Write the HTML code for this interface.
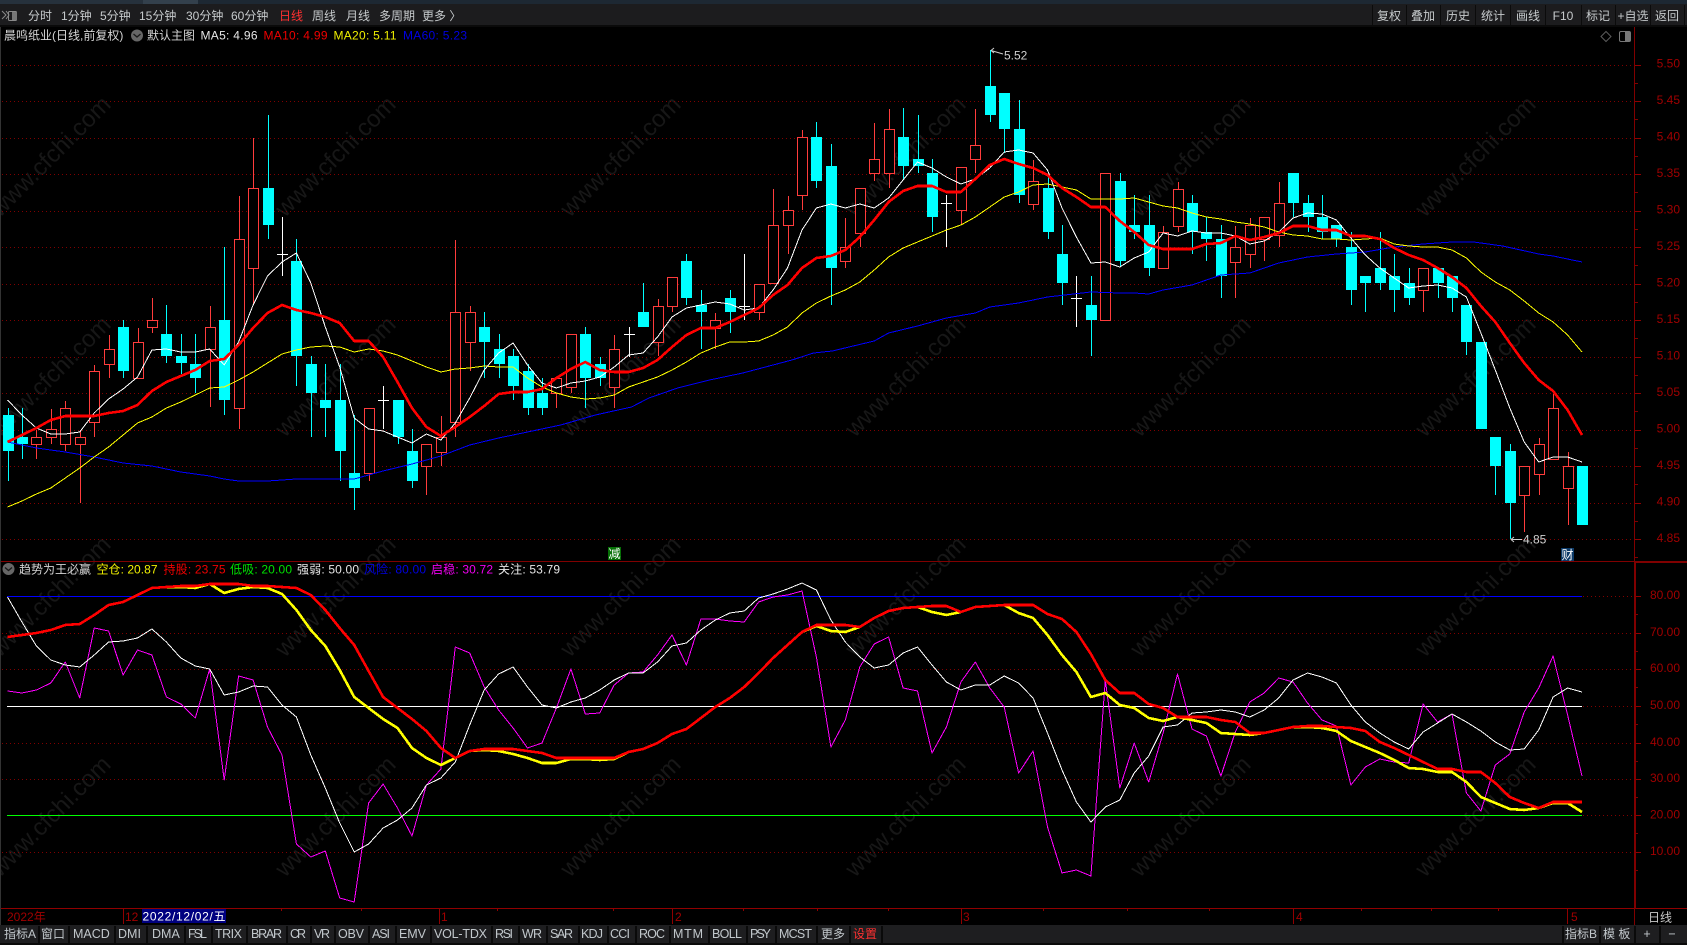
<!DOCTYPE html>
<html>
<head>
<meta charset="utf-8">
<title>晨鸣纸业</title>
<style>
html,body{margin:0;padding:0;background:#000;width:1687px;height:945px;overflow:hidden}
svg{display:block;position:absolute;left:0;top:0}
text{font-family:"Liberation Sans","Noto Sans CJK SC",sans-serif;font-size:12px}
.t{fill:#c6cacc}
.b{fill:#c2c8cc;font-size:12.5px}
.ax{fill:#a00000;text-anchor:end}
.d{fill:#a00000}
.wm{fill:#171717;font-size:24px;text-anchor:middle}
.c{text-anchor:middle}
</style>
</head>
<body>
<svg width="1687" height="945" viewBox="0 0 1687 945" xmlns="http://www.w3.org/2000/svg">
<rect width="1687" height="945" fill="#000"/>

<!-- watermark -->
<g>
<text class="wm" transform="translate(56 162) rotate(-45)">www.cfchi.com</text>
<text class="wm" transform="translate(341 162) rotate(-45)">www.cfchi.com</text>
<text class="wm" transform="translate(626 162) rotate(-45)">www.cfchi.com</text>
<text class="wm" transform="translate(911 162) rotate(-45)">www.cfchi.com</text>
<text class="wm" transform="translate(1196 162) rotate(-45)">www.cfchi.com</text>
<text class="wm" transform="translate(1481 162) rotate(-45)">www.cfchi.com</text>
<text class="wm" transform="translate(56 382) rotate(-45)">www.cfchi.com</text>
<text class="wm" transform="translate(341 382) rotate(-45)">www.cfchi.com</text>
<text class="wm" transform="translate(626 382) rotate(-45)">www.cfchi.com</text>
<text class="wm" transform="translate(911 382) rotate(-45)">www.cfchi.com</text>
<text class="wm" transform="translate(1196 382) rotate(-45)">www.cfchi.com</text>
<text class="wm" transform="translate(1481 382) rotate(-45)">www.cfchi.com</text>
<text class="wm" transform="translate(56 602) rotate(-45)">www.cfchi.com</text>
<text class="wm" transform="translate(341 602) rotate(-45)">www.cfchi.com</text>
<text class="wm" transform="translate(626 602) rotate(-45)">www.cfchi.com</text>
<text class="wm" transform="translate(911 602) rotate(-45)">www.cfchi.com</text>
<text class="wm" transform="translate(1196 602) rotate(-45)">www.cfchi.com</text>
<text class="wm" transform="translate(1481 602) rotate(-45)">www.cfchi.com</text>
<text class="wm" transform="translate(56 822) rotate(-45)">www.cfchi.com</text>
<text class="wm" transform="translate(341 822) rotate(-45)">www.cfchi.com</text>
<text class="wm" transform="translate(626 822) rotate(-45)">www.cfchi.com</text>
<text class="wm" transform="translate(911 822) rotate(-45)">www.cfchi.com</text>
<text class="wm" transform="translate(1196 822) rotate(-45)">www.cfchi.com</text>
<text class="wm" transform="translate(1481 822) rotate(-45)">www.cfchi.com</text>
</g>

<g id="grid"></g>
<g id="candles" shape-rendering="crispEdges"></g>
<g id="lines" fill="none" stroke-linejoin="round" shape-rendering="crispEdges"></g>

<!-- frame lines -->
<g shape-rendering="crispEdges">
<rect x="0" y="27" width="1" height="898" fill="#333"/>
<rect x="1" y="561" width="1686" height="1" fill="#800000"/>
<rect x="1635" y="561" width="52" height="2" fill="#800000"/>
<rect x="1" y="908" width="1686" height="1" fill="#900000"/>
<rect x="1634" y="27" width="1" height="534" fill="#800000"/>
<rect x="1634" y="561" width="2" height="348" fill="#800000"/>
<rect x="1634" y="909" width="1" height="16" fill="#800000"/>
</g>

<!-- price axis -->
<text class="ax" x="1680" y="67.5">5.50</text>
<text class="ax" x="1680" y="104">5.45</text>
<text class="ax" x="1680" y="140.5">5.40</text>
<text class="ax" x="1680" y="177">5.35</text>
<text class="ax" x="1680" y="213.5">5.30</text>
<text class="ax" x="1680" y="250">5.25</text>
<text class="ax" x="1680" y="286.5">5.20</text>
<text class="ax" x="1680" y="323">5.15</text>
<text class="ax" x="1680" y="359.5">5.10</text>
<text class="ax" x="1680" y="396">5.05</text>
<text class="ax" x="1680" y="432.5">5.00</text>
<text class="ax" x="1680" y="469">4.95</text>
<text class="ax" x="1680" y="505.5">4.90</text>
<text class="ax" x="1680" y="542">4.85</text>
<text class="ax" x="1680" y="599">80.00</text>
<text class="ax" x="1680" y="636">70.00</text>
<text class="ax" x="1680" y="672">60.00</text>
<text class="ax" x="1680" y="709">50.00</text>
<text class="ax" x="1680" y="746">40.00</text>
<text class="ax" x="1680" y="782">30.00</text>
<text class="ax" x="1680" y="818.5">20.00</text>
<text class="ax" x="1680" y="855">10.00</text>

<!-- top bar -->
<rect x="0" y="0" width="1687" height="4" fill="#1d2833"/>
<rect x="0" y="0" width="143" height="4" fill="#26313c"/>
<rect x="143" y="0" width="55" height="4" fill="#33404c"/>
<rect x="0" y="4" width="1687" height="21" fill="#1c1c1e"/>
<rect x="0" y="25" width="1687" height="2" fill="#0a0a0a"/>
<g fill="none" stroke="#8a8a8a">
<path d="M2 11l4 4-4 4M6 11l3 4-3 4" stroke-width="1"/>
<rect x="8.5" y="11.5" width="8" height="9" rx="1"/>
</g>
<rect x="12" y="12" width="5" height="8" fill="#777"/>
<text class="t" x="28" y="20">分时</text>
<text class="t" x="61" y="20">1分钟</text>
<text class="t" x="100" y="20">5分钟</text>
<text class="t" x="139" y="20">15分钟</text>
<text class="t" x="186" y="20">30分钟</text>
<text class="t" x="231" y="20">60分钟</text>
<text x="279" y="20" fill="#ff3030">日线</text>
<text class="t" x="312" y="20">周线</text>
<text class="t" x="346" y="20">月线</text>
<text class="t" x="379" y="20">多周期</text>
<text class="t" x="422" y="20">更多 〉</text>
<g fill="#0b0b0b" shape-rendering="crispEdges">
<rect x="1372" y="5" width="1" height="20"/><rect x="1406" y="5" width="1" height="20"/><rect x="1440" y="5" width="1" height="20"/><rect x="1475" y="5" width="1" height="20"/><rect x="1510" y="5" width="1" height="20"/><rect x="1545" y="5" width="1" height="20"/><rect x="1581" y="5" width="1" height="20"/><rect x="1615" y="5" width="1" height="20"/><rect x="1650" y="5" width="1" height="20"/><rect x="1684" y="5" width="1" height="20"/>
</g>
<text class="t c" x="1389" y="20">复权</text>
<text class="t c" x="1423" y="20">叠加</text>
<text class="t c" x="1458" y="20">历史</text>
<text class="t c" x="1493" y="20">统计</text>
<text class="t c" x="1528" y="20">画线</text>
<text class="t c" x="1563" y="20">F10</text>
<text class="t c" x="1598" y="20">标记</text>
<text class="t c" x="1633" y="20">+自选</text>
<text class="t c" x="1667" y="20">返回</text>

<!-- info row -->
<text x="4" y="39.5" fill="#d4d4d4">晨鸣纸业(日线,前复权)</text>
<circle cx="137" cy="35.5" r="6" fill="#666"/>
<path d="M133.5 34l3.5 3 3.5-3" fill="none" stroke="#1a1a1a" stroke-width="1.3"/>
<text x="147" y="39.5" fill="#d4d4d4">默认主图</text>
<text x="200.5" y="39.5" fill="#e6e6e6" textLength="57">MA5: 4.96</text>
<text x="263.5" y="39.5" fill="#f00000" textLength="64">MA10: 4.99</text>
<text x="333.5" y="39.5" fill="#f0f000" textLength="63">MA20: 5.11</text>
<text x="403" y="39.5" fill="#0000e0" textLength="64">MA60: 5.23</text>
<path d="M1606 31.5l5 5-5 5-5-5z" fill="none" stroke="#5c5c5c"/>
<rect x="1619.5" y="31.5" width="11" height="10" rx="1.5" fill="none" stroke="#777"/>
<rect x="1625" y="32" width="5" height="9" fill="#777"/>

<!-- indicator title -->
<circle cx="8.5" cy="569" r="6" fill="#666"/>
<path d="M5 567.5l3.5 3 3.5-3" fill="none" stroke="#1a1a1a" stroke-width="1.3"/>
<text x="19" y="573.5" fill="#d4d4d4">趋势为王必赢</text>
<text x="96.5" y="573.5" fill="#f0f000" textLength="61">空仓: 20.87</text>
<text x="163.5" y="573.5" fill="#f00000" textLength="62">持股: 23.75</text>
<text x="230" y="573.5" fill="#00e000" textLength="62">低吸: 20.00</text>
<text x="297" y="573.5" fill="#e6e6e6" textLength="62">强弱: 50.00</text>
<text x="364" y="573.5" fill="#0000e0" textLength="62">风险: 80.00</text>
<text x="431" y="573.5" fill="#f000f0" textLength="62">启稳: 30.72</text>
<text x="498" y="573.5" fill="#e6e6e6" textLength="62">关注: 53.79</text>

<!-- marks -->
<path d="M991 50.5L1003 54M991 50.5l3-2.5M991 50.5l3 2.5" fill="none" stroke="#ccc"/>
<text x="1004" y="59.5" fill="#d0d0d0">5.52</text>
<path d="M1511 539.5H1522M1511 539.5l3-2.5M1511 539.5l3 2.5" fill="none" stroke="#ccc"/>
<text x="1523" y="543.5" fill="#d0d0d0">4.85</text>
<rect x="608" y="547" width="13" height="13" fill="#067006"/>
<text x="608.5" y="558" fill="#fff" style="font-size:12px">减</text>
<rect x="1561" y="548" width="13" height="13" fill="#0c3a68"/>
<text x="1561.5" y="559" fill="#fff" style="font-size:12px">财</text>

<!-- date axis -->
<text class="d" x="7" y="921">2022年</text>
<rect x="123" y="909" width="1" height="15" fill="#900000"/>
<text class="d" x="125" y="921">12</text>
<rect x="142" y="909" width="84" height="14" fill="#000080"/>
<text x="142.5" y="920.5" fill="#fff" textLength="83">2022/12/02/五</text>
<rect x="439" y="909" width="1" height="15" fill="#900000"/>
<text class="d" x="441" y="921">1</text>
<rect x="672" y="909" width="1" height="15" fill="#900000"/>
<text class="d" x="675" y="921">2</text>
<rect x="961" y="909" width="1" height="15" fill="#900000"/>
<text class="d" x="963" y="921">3</text>
<rect x="1293" y="909" width="1" height="15" fill="#900000"/>
<text class="d" x="1296" y="921">4</text>
<rect x="1567" y="909" width="1" height="15" fill="#900000"/>
<text class="d" x="1571" y="921">5</text>
<text x="1648" y="921.5" fill="#c8c8c8">日线</text>

<!-- bottom bar -->
<rect x="0" y="925" width="1687" height="18" fill="#1e1e20"/>
<g id="btm" fill="#0a0a0a" shape-rendering="crispEdges"></g>
<text class="b" x="4" y="938" style="font-size:12px">指标A</text>
<text class="b" x="41" y="938" style="font-size:12px">窗口</text>
<text class="b" x="73" y="938">MACD</text>
<text class="b" x="118" y="938">DMI</text>
<text class="b" x="152" y="938">DMA</text>
<text class="b" x="188" y="938" textLength="19">FSL</text>
<text class="b" x="215" y="938" textLength="27">TRIX</text>
<text class="b" x="251" y="938" textLength="31">BRAR</text>
<text class="b" x="290" y="938" textLength="16">CR</text>
<text class="b" x="314" y="938" textLength="16">VR</text>
<text class="b" x="338" y="938" textLength="26">OBV</text>
<text class="b" x="372" y="938" textLength="18">ASI</text>
<text class="b" x="399" y="938" textLength="27">EMV</text>
<text class="b" x="434" y="938" textLength="53">VOL-TDX</text>
<text class="b" x="495" y="938" textLength="18">RSI</text>
<text class="b" x="522" y="938" textLength="20">WR</text>
<text class="b" x="550" y="938" textLength="23">SAR</text>
<text class="b" x="581" y="938" textLength="22">KDJ</text>
<text class="b" x="610" y="938" textLength="20">CCI</text>
<text class="b" x="639" y="938" textLength="26">ROC</text>
<text class="b" x="673" y="938" textLength="30">MTM</text>
<text class="b" x="712" y="938" textLength="30">BOLL</text>
<text class="b" x="750" y="938" textLength="21">PSY</text>
<text class="b" x="779" y="938" textLength="33">MCST</text>
<text class="b" x="821" y="938" style="font-size:12px">更多</text>
<text x="853" y="938" fill="#ff3030">设置</text>
<text class="b" x="1565" y="938" style="font-size:12px">指标B</text>
<text class="b" x="1603" y="938" style="font-size:12px">模 板</text>
<text class="b c" x="1647" y="938">+</text>
<text class="b c" x="1672" y="938">−</text>
<rect x="0" y="943" width="1687" height="2" fill="#0a0a0a"/>
</svg>

<script>
(function(){
var X=function(i){return 7.5+14.445*i;};
var DR='#800000';
var DASH='1 3';
var g='';
var py=[65,101,137.5,174,210.5,247,283.5,320,356.5,393,429.5,466,503,539];
py.forEach(function(y){
  g+='<path d="M2 '+(Math.round(y)+.5)+'H1634" stroke="'+DR+'" stroke-dasharray="'+DASH+'" fill="none" shape-rendering="crispEdges"/>';
  g+='<path d="M1635 '+(Math.round(y)+.5)+'h6" stroke="#900000" fill="none" shape-rendering="crispEdges"/>';
  g+='<path d="M1635 '+(Math.round(y+18.25)+.5)+'h3" stroke="#800000" fill="none" shape-rendering="crispEdges"/>';
});
[633,669,743,779,852].forEach(function(y){
  g+='<path d="M2 '+(y+.5)+'H1634" stroke="'+DR+'" stroke-dasharray="'+DASH+'" fill="none" shape-rendering="crispEdges"/>';
});
[596,706,815].forEach(function(y){
  g+='<path d="M1583 '+(y+.5)+'H1634" stroke="'+DR+'" stroke-dasharray="'+DASH+'" fill="none" shape-rendering="crispEdges"/>';
});
[596,633,669,706,743,779,815,852].forEach(function(y){
  g+='<path d="M1635 '+(y+.5)+'h6" stroke="#900000" fill="none" shape-rendering="crispEdges"/>';
  g+='<path d="M1635 '+(y+18.5)+'h3" stroke="#800000" fill="none" shape-rendering="crispEdges"/>';
});
[[596,'#0000ff'],[706,'#ffffff'],[815,'#00ff00']].forEach(function(a){
  g+='<path d="M7 '+(a[0]+.5)+'H1582" stroke="'+a[1]+'" fill="none" shape-rendering="crispEdges"/>';
});
[281,361,497,613,743,817,888,1043,1127,1209,1361,1431,1498].forEach(function(x){
  g+='<path d="M'+(x+.5)+' 909v2" stroke="#900000" fill="none" shape-rendering="crispEdges"/>';
});
document.getElementById('grid').innerHTML=g;

var C="c 408 415 451 481|c 408 437 444 459|r 430 437 444 459|r 409 429 437 444|r 401 408 444 451|r 430 437 444 503|r 365 371 422 437|r 335 349 364 378|c 320 327 371 378|r 328 342 378 378|r 298 320 327 333|c 305 334 356 363|c 334 356 363 374|c 334 364 378 393|r 306 327 349 407|c 247 320 400 415|r 196 239 408 429|r 138 188 268 305|c 115 188 225 239|w 217 254 254 276|c 239 261 356 386|c 356 364 393 437|c 364 400 408 437|c 364 400 451 481|c 415 473 488 510|r 408 408 473 481|w 386 400 400 429|c 400 400 437 444|c 429 451 481 488|r 444 444 466 495|r 416 437 452 466|r 240 312 422 437|r 306 312 342 371|c 312 327 342 378|c 334 349 364 378|c 349 356 386 400|c 364 371 408 415|c 378 393 408 415|r 378 378 393 408|r 334 334 387 393|c 327 334 378 408|c 357 364 378 386|r 335 349 387 408|w 327 334 334 357|c 283 312 327 327|r 299 306 342 356|r 277 277 306 312|c 254 261 298 305|c 290 305 312 349|r 313 320 328 349|c 290 298 312 333|w 254 306 306 320|r 284 284 312 320|r 189 225 283 283|r 196 210 225 254|r 130 137 195 210|c 122 137 181 188|c 144 166 268 305|r 218 247 261 268|r 188 188 233 247|r 123 159 173 181|r 109 129 173 188|c 108 137 166 180|c 115 159 166 173|c 159 173 217 232|w 195 203 203 247|r 167 167 210 225|r 109 145 159 173|c 50 86 115 122|c 93 93 129 153|c 100 129 195 203|r 160 181 204 210|c 177 188 232 239|c 225 254 283 305|w 276 298 298 327|c 276 305 320 356|r 173 173 320 320|c 173 181 261 267|c 195 225 232 239|c 195 225 268 276|r 226 232 268 268|r 182 189 226 232|c 195 203 232 254|c 217 232 239 261|c 225 239 276 298|r 226 247 262 298|r 218 225 254 268|r 217 217 239 261|r 182 203 235 247|c 173 173 203 217|c 195 203 217 232|c 195 217 232 239|c 225 225 239 247|c 232 247 290 305|c 276 276 283 312|c 232 268 283 290|c 254 276 290 312|c 268 283 298 305|r 268 268 290 312|c 268 268 283 298|c 276 276 298 312|c 305 305 342 355|c 342 342 429 429|c 437 437 466 495|c 444 451 503 539|r 466 466 495 532|r 438 444 474 495|r 394 408 459 459|r 452 466 488 525|c 466 466 525 525".split('|');
var s='';
C.forEach(function(r,i){
  var p=r.split(' '),t=p[0],wt=+p[1],bt=+p[2],bb=+p[3],wb=+p[4];
  var x=Math.round(X(i));
  var col=t=='c'?'#00ffff':t=='r'?'#ff3c3c':'#ffffff';
  if(wb>wt) s+='<rect x="'+x+'" y="'+wt+'" width="1" height="'+(wb-wt)+'" fill="'+col+'"/>';
  if(t=='c') s+='<rect x="'+(x-5)+'" y="'+bt+'" width="11" height="'+(bb-bt)+'" fill="#00ffff"/>';
  else if(t=='r') s+='<rect x="'+(x-4.5)+'" y="'+(bt+.5)+'" width="10" height="'+(bb-bt)+'" fill="#000" stroke="#ff3c3c"/>';
  else s+='<rect x="'+(x-5)+'" y="'+bt+'" width="11" height="1" fill="#fff"/>';
});
document.getElementById('candles').innerHTML=s;

var ma5=[400,415,428,434,434,432,413,399,389,377,350,349,352,352,349,365,342,305,276,262,253,283,327,367,418,429,431,437,443,434,440,423,398,370,353,343,365,383,388,383,381,377,367,355,353,337,317,308,305,302,304,310,308,290,268,230,208,204,208,204,208,198,180,162,168,177,184,179,168,152,150,153,170,208,237,263,262,267,258,252,233,236,231,233,233,236,244,241,232,218,213,214,220,238,255,268,278,288,286,285,288,297,333,370,408,442,462,457,457,462];
var ma10=[442,435,428,420,416,416,416,413,411,405,391,382,376,370,361,359,345,328,313,305,310,313,317,323,341,341,357,382,408,427,436,427,417,406,394,392,392,389,378,369,362,370,372,372,368,360,347,335,328,328,322,315,308,295,285,268,258,256,250,237,220,202,191,186,186,192,192,179,165,159,164,168,175,188,197,207,207,221,232,245,249,249,249,244,243,236,240,237,233,226,226,230,230,236,236,239,248,255,260,268,277,288,306,322,343,363,380,391,410,435];
var ma20=[507,501,494,488,478,468,457,447,435,423,417,408,402,395,388,387,380,372,363,354,350,347,346,347,352,349,351,355,361,367,372,369,368,366,367,367,378,387,393,397,399,398,395,387,382,377,370,362,353,347,342,342,341,335,327,313,303,296,290,282,270,257,248,242,236,230,225,217,207,197,192,185,184,187,190,199,199,199,198,202,206,208,213,217,219,222,224,227,232,235,236,239,239,240,239,238,244,246,247,247,250,258,272,282,290,301,313,322,335,352];
var ma60=[[0,442],[2,448],[4,452],[6,457],[8,463],[10,466],[12,472],[14,476],[15,479],[16,481],[18,481],[20,479],[22,479],[24,479],[26,471],[28,464],[30,456],[32,445],[34,438],[36,432],[38.3,425],[40.7,415],[43.2,407],[44.4,398],[46.4,388],[48.6,380],[50.9,373],[54.3,360],[55.8,353],[57.1,351],[60,341],[61,333],[63,326],[65,318],[67,313],[68,307],[70,303],[72,297],[75,292],[77,293],[78,293],[79,294],[80,290],[82,285],[84,275],[86,273],[88,263],[90,257],[92,254],[94,252],[96,247],[98,244],[100,242],[101.5,242],[103.5,246],[106,254],[107,256],[109,262]];
var red=[637,635,633,630,625,624,615,605,602,595,588,587,586,586,584,584,584,586,586,587,588,595,610,628,645,671,697,708,719,731,748,758,751,749,749,749,751,753,758,758,758,758,758,752,749,743,734,729,718,707,698,687,673,658,645,632,625,625,625,627,618,611,608,607,606,606,612,607,606,605,605,605,614,619,632,654,680,693,693,704,708,717,717,717,720,722,733,733,730,727,726,726,727,728,731,742,748,755,762,769,769,772,772,783,797,803,808,802,802,802];
var yel=[637,635,633,630,625,624,615,605,602,595,588,587,587,588,584,593,589,587,588,594,610,630,646,670,697,708,719,728,748,758,765,758,751,750,751,754,758,763,763,759,759,760,759,752,749,743,734,729,718,707,698,687,673,658,645,632,626,631,632,627,618,611,608,607,612,615,612,607,606,605,613,618,635,655,672,697,693,705,708,718,721,717,720,723,733,734,735,733,730,727,727,728,731,741,747,753,760,768,769,772,772,782,797,803,809,810,808,803,803,812];
var wht=[597,622,646,660,665,667,655,642,641,638,629,642,658,666,669,695,692,686,687,705,717,755,788,823,852,844,828,820,808,785,778,762,725,690,674,667,687,705,708,702,698,690,680,673,673,662,646,643,630,620,613,611,598,594,589,583,590,620,642,657,668,665,653,647,665,682,690,685,685,676,683,698,733,770,802,822,807,800,773,756,727,725,713,712,710,712,717,710,698,680,673,677,683,705,722,733,742,749,732,723,714,722,731,742,750,749,730,697,688,692];
var mag=[691,693,690,683,662,698,628,631,675,650,655,697,704,718,669,780,676,680,727,755,844,857,851,898,902,803,784,808,836,785,769,647,653,687,710,728,748,743,708,669,714,713,685,673,672,655,635,665,619,619,621,622,602,597,595,591,657,747,720,667,644,637,688,691,753,727,682,662,688,707,773,751,827,873,870,876,680,788,743,782,733,674,729,736,776,732,702,693,678,682,703,720,726,785,767,759,762,763,704,722,714,793,811,765,754,712,688,656,715,776];
function pl(a,col,w){
  var pts=a.map(function(v,i){return Array.isArray(v)?X(v[0]).toFixed(1)+','+v[1]:X(i).toFixed(1)+','+v;}).join(' ');
  return '<polyline points="'+pts+'" stroke="'+col+'" stroke-width="'+w+'"/>';
}
document.getElementById('lines').innerHTML=
  pl(ma60,'#0000ff',1)+pl(ma20,'#ffff00',1)+pl(ma5,'#ffffff',1)+pl(ma10,'#ff0000',2.6)+
  pl(mag,'#ff00ff',1)+pl(wht,'#ffffff',1)+pl(yel,'#ffff00',2.6)+pl(red,'#ff0000',2.6);

var b='';
[38,68,114,146,184,211,246,286,310,334,368,395,430,491,518,546,578,607,635,669,708,746,775,816,849,881,1562,1599,1634,1659].forEach(function(x){
  b+='<rect x="'+x+'" y="926" width="2" height="17"/>';
});
document.getElementById('btm').innerHTML=b;
})();
</script>
</body>
</html>
